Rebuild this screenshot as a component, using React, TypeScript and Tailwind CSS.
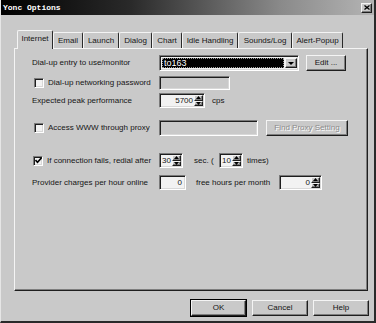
import React from 'react';

const fuente = { fontFamily: '"Liberation Sans", Arial, sans-serif' };

const pestanas = [
  { titulo: 'Internet', ancho: 'w-[36px]' },
  { titulo: 'Email', ancho: 'w-[30px]' },
  { titulo: 'Launch', ancho: 'w-[36px]' },
  { titulo: 'Dialog', ancho: 'w-[33px]' },
  { titulo: 'Chart', ancho: 'w-[30px]' },
  { titulo: 'Idle Handling', ancho: 'w-[56px]' },
  { titulo: 'Sounds/Log', ancho: 'w-[54px]' },
  { titulo: 'Alert-Popup', ancho: 'w-[51px]' },
];

const hundido =
  'border border-t-[#7a7a7a] border-l-[#7a7a7a] border-b-white border-r-white shadow-[inset_1px_1px_0_#1e1e1e,inset_-1px_-1px_0_#d8d8d8]';
const elevado =
  'border border-t-[#f4f4f4] border-l-[#f4f4f4] border-b-[#1e1e1e] border-r-[#1e1e1e] shadow-[inset_-1px_-1px_0_#7e7e7e] bg-[#c9c9c9]';

const Casilla = ({ marcada = false }: { marcada?: boolean }) => (
  <div className={`w-[10px] h-[10px] shrink-0 bg-[#f2f2f2] ${hundido} flex items-center justify-center`}>
    {marcada && (
      <svg width="7" height="7" viewBox="0 0 7 7">
        <path d="M0.5 3 L2.5 5.2 L6.5 0.8" stroke="#000" strokeWidth="1.6" fill="none" />
      </svg>
    )}
  </div>
);

const Flechas = () => (
  <div className="flex flex-col h-full w-[9px] shrink-0">
    <div className={`flex-1 ${elevado} flex items-center justify-center`}>
      <svg width="5" height="3" viewBox="0 0 5 3"><path d="M2.5 0 L5 3 L0 3 Z" fill="#000" /></svg>
    </div>
    <div className={`flex-1 ${elevado} flex items-center justify-center`}>
      <svg width="5" height="3" viewBox="0 0 5 3"><path d="M0 0 L5 0 L2.5 3 Z" fill="#000" /></svg>
    </div>
  </div>
);

const Contador = ({ valor, ancho }: { valor: string; ancho: string }) => (
  <div className={`${ancho} h-[15px] shrink-0 bg-[#f2f2f2] ${hundido} flex items-stretch p-px`}>
    <span className="flex-1 text-right pr-px leading-[11px] text-[8px]">{valor}</span>
    <Flechas />
  </div>
);

const Boton = ({ texto, ancho, deshabilitado = false }: { texto: string; ancho: string; deshabilitado?: boolean }) => (
  <div
    className={`${ancho} h-[16px] shrink-0 ${elevado} flex items-center justify-center text-[8px] ${
      deshabilitado ? 'text-[#8c8c8c] [text-shadow:1px_1px_0_#fff]' : ''
    }`}
  >
    {texto}
  </div>
);

export default function App() {
  return (
    <div
      className="w-[376px] h-[323px] bg-[#c9c9c9] text-[#151515] border-r-2 border-b-2 border-r-[#2a2a2a] border-b-[#2a2a2a] border-l border-l-[#e6e6e6] overflow-hidden"
      style={fuente}
    >
      {/* Barra de título */}
      <div className="h-[15px] bg-[linear-gradient(to_right,#000_0%,#2a2a2a_35%,#8a8a8a_75%,#b4b4b4_100%)] flex items-center justify-between pl-[2px] pr-[2px]">
        <span className="text-white text-[8px] font-bold" style={{ fontFamily: '"Liberation Mono", monospace' }}>
          Yonc Options
        </span>
        <div className={`w-[11px] h-[10px] ${elevado} flex items-center justify-center`}>
          <svg width="6" height="5" viewBox="0 0 6 5">
            <path d="M0.5 0.5 L5.5 4.5 M5.5 0.5 L0.5 4.5" stroke="#000" strokeWidth="1.3" />
          </svg>
        </div>
      </div>

      {/* Pestañas */}
      <div className="mt-[15px] ml-[16px] flex items-end h-[18px] relative z-10">
        {pestanas.map((p, i) => (
          <div
            key={p.titulo}
            className={`${p.ancho} ${
              i === 0 ? 'h-[19px] -mb-px bg-[#c9c9c9] pb-[2px]' : 'h-[16px]'
            } shrink-0 border-t border-l border-r border-t-[#f4f4f4] border-l-[#f4f4f4] border-r-[#2a2a2a] rounded-t-[2px] flex items-center justify-center text-[8px] whitespace-nowrap`}
          >
            {p.titulo}
          </div>
        ))}
      </div>

      {/* Panel */}
      <div className="ml-[13px] w-[354px] h-[243px] border border-t-[#f4f4f4] border-l-[#f4f4f4] border-r-[#1e1e1e] border-b-[#1e1e1e] shadow-[inset_-1px_-1px_0_#7e7e7e] pl-[17px] pt-[6px] text-[8px]">
        {/* Fila 1 */}
        <div className="flex items-center h-[16px]">
          <span className="w-[127px] shrink-0">Dial-up entry to use/monitor</span>
          <div className={`w-[140px] h-[16px] shrink-0 bg-[#f2f2f2] ${hundido} flex items-stretch p-[2px] pr-px`}>
            <div className="flex-1 bg-black border border-dotted border-[#9a9a9a] flex items-center pl-[1px]">
              <span className="text-white text-[9px] leading-none">to163</span>
            </div>
            <div className={`w-[12px] ml-px ${elevado} flex items-center justify-center`}>
              <svg width="6" height="3" viewBox="0 0 6 3"><path d="M0 0 L6 0 L3 3 Z" fill="#000" /></svg>
            </div>
          </div>
          <div className="ml-[7px]">
            <Boton texto="Edit ..." ancho="w-[40px]" />
          </div>
        </div>

        {/* Fila 2 */}
        <div className="flex items-center h-[14px] mt-[5px]">
          <div className="w-[127px] shrink-0 flex items-center pl-[2px]">
            <Casilla />
            <span className="ml-[4px]">Dial-up networking password</span>
          </div>
          <div className={`w-[71px] h-[14px] ${hundido}`} />
        </div>

        {/* Fila 3 */}
        <div className="flex items-center h-[15px] mt-[3px]">
          <span className="w-[127px] shrink-0">Expected peak performance</span>
          <Contador valor="5700" ancho="w-[46px]" />
          <span className="ml-[7px]">cps</span>
        </div>

        {/* Fila 4 */}
        <div className="flex items-center h-[16px] mt-[12px]">
          <div className="w-[127px] shrink-0 flex items-center pl-[2px]">
            <Casilla />
            <span className="ml-[4px]">Access WWW through proxy</span>
          </div>
          <div className={`w-[99px] h-[16px] ${hundido}`} />
          <div className="ml-[8px]">
            <Boton texto="Find Proxy Setting" ancho="w-[82px]" deshabilitado />
          </div>
        </div>

        {/* Fila 5 */}
        <div className="flex items-center h-[15px] mt-[17px]">
          <div className="w-[127px] shrink-0 flex items-center pl-[1px]">
            <Casilla marcada />
            <span className="ml-[4px]">If connection fails, redial after</span>
          </div>
          <Contador valor="30" ancho="w-[24px]" />
          <span className="ml-[11px] w-[25px]">sec. (</span>
          <Contador valor="10" ancho="w-[24px]" />
          <span className="ml-[4px]">times)</span>
        </div>

        {/* Fila 6 */}
        <div className="flex items-center h-[15px] mt-[7px]">
          <span className="w-[127px] shrink-0">Provider charges per hour online</span>
          <div className={`w-[27px] h-[15px] bg-[#f2f2f2] ${hundido} flex items-center justify-end pr-[3px]`}>0</div>
          <span className="ml-[10px] w-[83px]">free hours per month</span>
          <Contador valor="0" ancho="w-[43px]" />
        </div>
      </div>

      {/* Botones */}
      <div className="mt-[8px] flex justify-end gap-[5px] pr-[5px] text-[8px]">
        <div className="border border-black">
          <Boton texto="OK" ancho="w-[55px]" />
        </div>
        <div className="pt-px">
          <Boton texto="Cancel" ancho="w-[56px]" />
        </div>
        <div className="pt-px">
          <Boton texto="Help" ancho="w-[56px]" />
        </div>
      </div>
    </div>
  );
}
